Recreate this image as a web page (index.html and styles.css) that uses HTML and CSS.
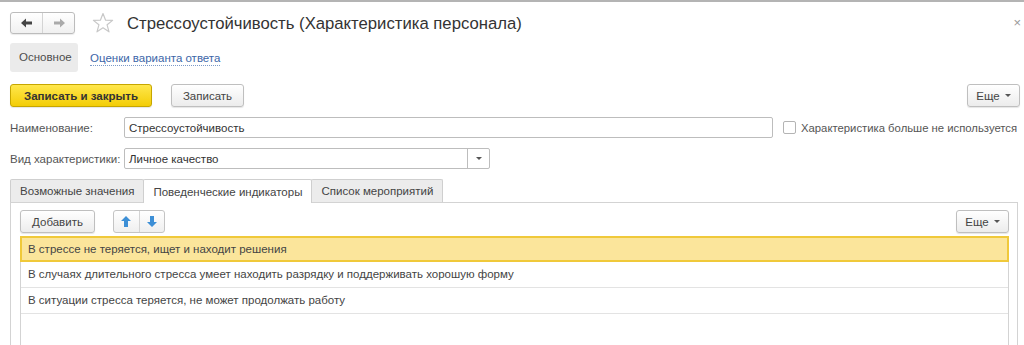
FILE: index.html
```html
<!DOCTYPE html>
<html>
<head>
    <meta charset="utf-8" />
    <title>Стрессоустойчивость</title>
    <link rel="stylesheet" href="styles.css">
</head>
<body>
    <div id="header">
        <div class="nav">
            <span class="nav-btn">
                <svg width="12" height="10" viewBox="0 0 12 10"><path d="M0 5 L5 0.5 L5 3.5 L11 3.5 L11 6.5 L5 6.5 L5 9.5 Z" fill="#444"/></svg>
            </span>
            <span class="nav-btn">
                <svg width="12" height="10" viewBox="0 0 12 10"><path d="M12 5 L7 0.5 L7 3.5 L1 3.5 L1 6.5 L7 6.5 L7 9.5 Z" fill="#aaa"/></svg>
            </span>
        </div>
        <svg class="star" width="22" height="22" viewBox="0 0 22 22"><path d="M11 1.5 L13.6 8.2 L20.6 8.4 L15.1 12.8 L17 19.8 L11 15.8 L5 19.8 L6.9 12.8 L1.4 8.4 L8.4 8.2 Z" fill="none" stroke="#c8c8c8" stroke-width="1.2" stroke-linejoin="round"/></svg>
        <h1>Стрессоустойчивость (Характеристика персонала)</h1>
        <span class="close">×</span>
    </div>

    <div id="sections">
        <span class="section active">Основное</span>
        <a class="section link">Оценки варианта ответа</a>
    </div>

    <div id="commands">
        <span class="btn btn-primary">Записать и закрыть</span>
        <span class="btn">Записать</span>
        <span class="btn btn-more">Еще <i class="caret"></i></span>
    </div>

    <div class="row">
        <label>Наименование:</label>
        <div class="field name-field">Стрессоустойчивость</div>
        <span class="check"></span>
        <span class="check-label">Характеристика больше не используется</span>
    </div>

    <div class="row">
        <label>Вид характеристики:</label>
        <div class="field kind-field">
            <span class="field-text">Личное качество</span>
            <span class="drop"><i class="caret"></i></span>
        </div>
    </div>

    <div id="tabs">
        <span class="tab">Возможные значения</span>
        <span class="tab active">Поведенческие индикаторы</span>
        <span class="tab">Список мероприятий</span>
    </div>

    <div id="panel">
        <div class="panel-bar">
            <span class="btn">Добавить</span>
            <div class="arrows">
                <span class="arrow-btn">
                    <svg width="10" height="11" viewBox="0 0 10 11"><path d="M5 0 L10 5 L7 5 L7 11 L3 11 L3 5 L0 5 Z" fill="#3d8fd6"/></svg>
                </span>
                <span class="arrow-btn">
                    <svg width="10" height="11" viewBox="0 0 10 11"><path d="M5 11 L10 6 L7 6 L7 0 L3 0 L3 6 L0 6 Z" fill="#3d8fd6"/></svg>
                </span>
            </div>
            <span class="btn btn-more">Еще <i class="caret"></i></span>
        </div>

        <ul id="grid">
            <li class="selected">В стрессе не теряется, ищет и находит решения</li>
            <li>В случаях длительного стресса умеет находить разрядку и поддерживать хорошую форму</li>
            <li>В ситуации стресса теряется, не может продолжать работу</li>
        </ul>
    </div>
</body>
</html>
```

FILE: styles.css
```css
* { margin: 0; padding: 0; box-sizing: border-box; }

body {
    background: #fff;
    border-top: 2px solid #b4b4b4;
    font-family: "Liberation Sans", Arial, sans-serif;
    font-size: 11.5px;
    color: #4d4d4d;
    height: 345px;
    overflow: hidden;
}

#header {
    display: flex;
    align-items: center;
    height: 41px;
    padding: 0 3px 0 10px;
}

#header .nav {
    display: flex;
    width: 65px;
    height: 22px;
    border: 1px solid #bcbcbc;
    border-radius: 3px;
    background: linear-gradient(#fff, #f0f0f0);
    box-shadow: 0 1px 1px rgba(0,0,0,0.08);
}

#header .nav-btn {
    flex: 1;
    display: flex;
    align-items: center;
    justify-content: center;
}

#header .nav-btn + .nav-btn { border-left: 1px solid #d4d4d4; }

#header .star { margin-left: 17px; }

#header h1 {
    margin-left: 13px;
    margin-top: 2px;
    font-size: 16.7px;
    font-weight: normal;
    color: #333;
}

#header .close {
    margin-left: auto;
    font-size: 13px;
    color: #999;
}

#sections {
    display: flex;
    align-items: center;
    height: 29px;
    padding-left: 10px;
}

#sections .section {
    height: 29px;
    line-height: 29px;
    padding: 0 9px;
}

#sections .active {
    width: 68px;
    background: #ebebeb;
    border-radius: 3px;
    color: #4d4d4d;
}

#sections .link {
    margin-left: 12px;
    padding: 1px 0 0;
    color: #3c66a8;
    line-height: 14px;
    height: auto;
    border-bottom: 1px dotted #7c9ac8;
}

#commands {
    display: flex;
    margin-top: 12px;
    padding: 0 4px 0 10px;
}

.btn {
    display: inline-flex;
    align-items: center;
    justify-content: center;
    height: 23px;
    padding: 0 12px;
    border: 1px solid #bfbfbf;
    border-radius: 3px;
    background: linear-gradient(#fff, #ececec);
    box-shadow: 0 1px 1px rgba(0,0,0,0.1);
    color: #444;
    white-space: nowrap;
}

.btn-primary {
    width: 142px;
    font-weight: bold;
    color: #333;
    border-color: #c6a600;
    background: linear-gradient(#ffe74c, #f3cd07);
}

#commands .btn-primary + .btn { margin-left: 19px; width: 73px; }

.btn-more {
    margin-left: auto;
    width: 53px;
    padding: 0;
}

.caret {
    display: inline-block;
    margin-left: 5px;
    border-left: 3px solid transparent;
    border-right: 3px solid transparent;
    border-top: 3px solid #555;
}

.row {
    display: flex;
    align-items: center;
    padding: 0 4px 0 10px;
    height: 21px;
    margin-top: 10px;
}

.row label {
    width: 114px;
    flex-shrink: 0;
    white-space: nowrap;
    color: #555;
}

.field {
    display: flex;
    align-items: center;
    flex-shrink: 0;
    height: 21px;
    border: 1px solid #bdbdbd;
    border-radius: 2px;
    padding-left: 4px;
    color: #333;
    background: #fff;
}

.name-field { width: 649px; }

.check {
    flex-shrink: 0;
    width: 13px;
    height: 13px;
    margin-left: 10px;
    border: 1px solid #b4b4b4;
    border-radius: 2px;
}

.check-label {
    margin-left: 5px;
    white-space: nowrap;
    font-size: 11.3px;
    color: #555;
}

.kind-field {
    width: 366px;
    padding-right: 0;
}

.kind-field .field-text { flex: 1; }

.kind-field .drop {
    width: 22px;
    height: 19px;
    display: flex;
    align-items: center;
    justify-content: center;
    border-left: 1px solid #bdbdbd;
}

.kind-field .drop .caret { margin-left: 0; }

#tabs {
    display: flex;
    margin-top: 10px;
    padding-left: 10px;
    height: 23px;
}

#tabs .tab {
    display: flex;
    align-items: center;
    padding: 0 9px;
    height: 23px;
    border: 1px solid #cfcfcf;
    border-bottom: none;
    border-radius: 2px 2px 0 0;
    background: #ececec;
    color: #444;
    white-space: nowrap;
}

#tabs .tab + .tab { margin-left: -1px; }

#tabs .tab.active {
    background: #fff;
    height: 24px;
    position: relative;
    z-index: 1;
}

#panel {
    margin: 0 6px 0 10px;
    border: 1px solid #d3d3d3;
    border-bottom: none;
    height: 144px;
    padding: 7px 8px 0 9px;
}

.panel-bar {
    display: flex;
    align-items: center;
}

.panel-bar .btn:first-child { width: 75px; padding: 0; }

.arrows {
    display: flex;
    margin-left: 18px;
    width: 52px;
    height: 23px;
    border: 1px solid #c4c4c4;
    border-radius: 3px;
    background: linear-gradient(#fff, #efefef);
}

.arrow-btn {
    flex: 1;
    display: flex;
    align-items: center;
    justify-content: center;
}

.arrow-btn + .arrow-btn { border-left: 1px solid #d4d4d4; }

#grid {
    list-style: none;
    margin-top: 3px;
    border: 1px solid #d3d3d3;
    border-bottom: none;
    height: 111px;
}

#grid li {
    height: 26px;
    line-height: 25px;
    padding-left: 7px;
    border-bottom: 1px solid #e3e3e3;
    color: #444;
}

#grid li.selected {
    background: #fbe59b;
    border: 2px solid #f0c93a;
    line-height: 22px;
    padding-left: 6px;
    margin: -1px -1px 0;
}
```
